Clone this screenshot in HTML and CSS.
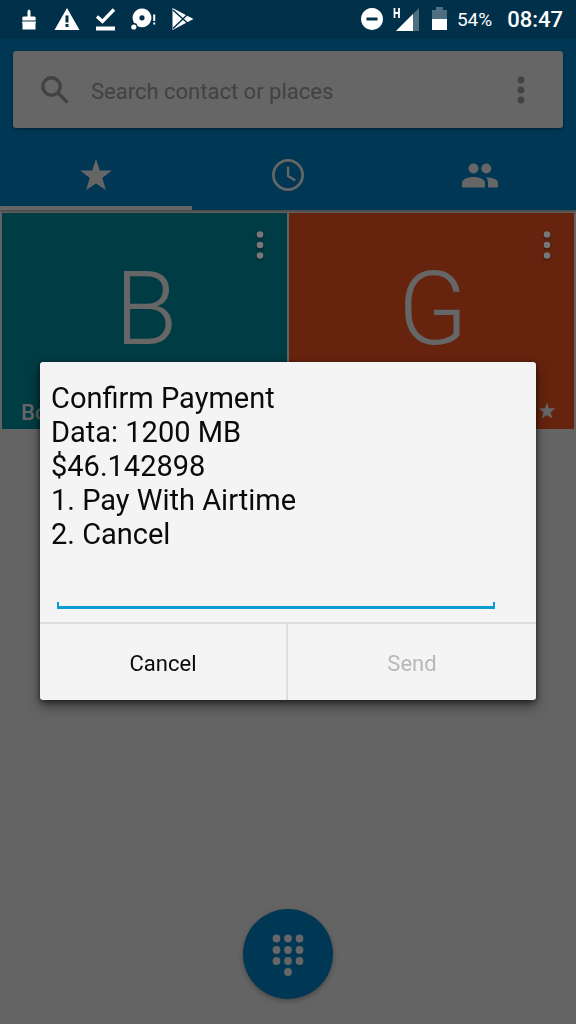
FILE: index.html
```html
<!DOCTYPE html>
<html lang="en">
<head>
<meta charset="utf-8">
<meta name="viewport" content="width=device-width, initial-scale=1">
<title>Phone</title>
<link rel="stylesheet" href="styles.css">
</head>
<body>
<div class="app">
  <div class="status">
    <div class="status-left">
      <svg class="notice" viewBox="0 0 26 26" aria-hidden="true"><path d="M11.500 5q1.500-3 3 0v5.500h4q1.200 0 1.200 1.500v2H6.300v-2q0-1.500 1.200-1.500h4z"/><path d="M6 15.500h14L19.500 18v5.500H6.500V18z"/><path d="M6.500 14.700h13" stroke="#9db0ba"/></svg>
      <svg class="notice" viewBox="0 0 26 26" aria-hidden="true"><path fill-rule="evenodd" d="M13 2L25.500 24H.5zM11.500 9.500v7h3v-7zm0 8.500V21h3v-3z"/></svg>
      <svg class="notice" viewBox="0 0 26 26" aria-hidden="true"><path d="M5 10.500l5.500 5L22 3.500" fill="none" stroke="#fff" stroke-width="3.400"/><path d="M4 20.500h19v4H4z"/></svg>
      <svg class="notice" viewBox="0 0 26 26" aria-hidden="true"><path fill-rule="evenodd" d="M12 2.500a9.400 9.400 0 1 1-.01 0zm0 6.800a2.600 2.600 0 1 0 .01 0z"/><circle cx="4" cy="20.500" r="3.400" fill="#00304a"/><circle cx="3.800" cy="21" r="2.600"/><path d="M23.200 8.500h2v6.500h-2zm0 8h2v2h-2z"/></svg>
      <svg class="notice" viewBox="0 0 26 26" aria-hidden="true"><path d="M4.500 2L25.500 13 4.500 24z"/><path d="M5 4l15 13.500M5 22.500L20 8" fill="none" stroke="#00304a" stroke-width="1.500"/></svg>
    </div>
    <div class="status-right">
      <svg class="dnd" viewBox="0 0 22 22" aria-hidden="true"><path fill-rule="evenodd" d="M11 0a11 11 0 1 1-.01 0zM5.500 9.500v3h11v-3z"/></svg>
      <svg class="signal" viewBox="0 0 26 24" aria-hidden="true"><path d="M26 1v23H3z" fill="#4d6f80"/><path d="M20 7v17H3z"/><path d="M1.500 1v10M6 1v10M1 6h5" fill="none" stroke="#fff" stroke-width="1.800"/></svg>
      <svg class="battery" viewBox="0 0 15 24" aria-hidden="true"><path d="M4 0h7v3h4v9H0V3h4z" fill="#4d6f80"/><path d="M0 12h15v11H0z"/></svg>
      <span class="percent">54%</span>
      <time class="clock">08:47</time>
    </div>
  </div>

  <header class="header">
    <div class="search">
      <label class="search-label" for="search" aria-label="Search">
        <svg class="search-icon" viewBox="0 0 28 28" aria-hidden="true"><circle cx="10.500" cy="10.500" r="8.700"/><path d="M17 17l9.500 9.500"/></svg>
      </label>
      <input class="search-input" id="search" type="text" placeholder="Search contact or places">
      <button class="more" type="button" aria-label="More options">
        <svg class="dots" viewBox="0 0 8 28" aria-hidden="true"><circle cx="4" cy="4" r="3.400"/><circle cx="4" cy="14" r="3.400"/><circle cx="4" cy="24" r="3.400"/></svg>
      </button>
    </div>
    <nav class="tabs">
      <button class="tab tab-on" type="button" aria-label="Favourites"><svg class="tab-icon" viewBox="0 0 36 36"><path d="M18 2l3.800 11.500 12 .1-9.500 7.400 3.500 12L18 26.500 8.200 33l3.500-12-9.500-7.400 12-.1z"/></svg></button>
      <button class="tab" type="button" aria-label="Recent"><svg class="tab-icon" viewBox="0 0 36 36"><g fill="none" stroke="#666" stroke-width="2.800"><circle cx="18" cy="18" r="14.600"/><path d="M18 9.500V19l7.300 4.500" stroke-width="2.300"/></g></svg></button>
      <button class="tab" type="button" aria-label="Contacts"><svg class="tab-icon" viewBox="0 0 36 36"><circle cx="11.500" cy="11.500" r="5"/><circle cx="24.300" cy="11.500" r="5"/><path d="M0 30.500v-4.500c0-4 6.500-6 11.500-6s11.500 2 11.500 6v4.500zM24 20.200c6 .3 12 2 12 5.800v4.500H26v-4.500c0-2.300-.5-4.300-2-5.800z"/></svg></button>
    </nav>
  </header>

  <main class="main">
    <section class="tiles">
      <article class="tile tile-teal">
        <button class="tile-more" type="button" aria-label="Contact details">
          <svg class="dots" viewBox="0 0 8 28" aria-hidden="true"><circle cx="4" cy="3.500" r="3.300"/><circle cx="4" cy="14" r="3.300"/><circle cx="4" cy="24.500" r="3.300"/></svg>
        </button>
        <span class="letter">B</span>
        <span class="name">Bo</span>
      </article>
      <article class="tile tile-orange">
        <button class="tile-more" type="button" aria-label="Contact details">
          <svg class="dots" viewBox="0 0 8 28" aria-hidden="true"><circle cx="4" cy="3.500" r="3.300"/><circle cx="4" cy="14" r="3.300"/><circle cx="4" cy="24.500" r="3.300"/></svg>
        </button>
        <span class="letter">G</span>
        <svg class="tile-star" viewBox="0 0 36 36" aria-hidden="true"><path d="M18 1l4 11.500 13 .1-10 8 3.500 12.400L18 26 7.500 33 11 20.600l-10-8 13-.1z"/></svg>
      </article>
    </section>
    <button class="fab" type="button" aria-label="Dial pad">
      <svg class="pad" viewBox="0 0 32 44" aria-hidden="true"><circle cx="4.500" cy="6.500" r="3.900"/><circle cx="16" cy="6.500" r="3.900"/><circle cx="27.500" cy="6.500" r="3.900"/><circle cx="4.500" cy="18" r="3.900"/><circle cx="16" cy="18" r="3.900"/><circle cx="27.500" cy="18" r="3.900"/><circle cx="4.500" cy="29" r="3.900"/><circle cx="16" cy="29" r="3.900"/><circle cx="27.500" cy="29" r="3.900"/><circle cx="16" cy="40" r="3.900"/></svg>
    </button>
  </main>
</div>

<div class="overlay">
  <form class="dialog" role="dialog" aria-modal="true" aria-labelledby="message">
    <div class="dialog-body">
      <label class="message" id="message" for="reply">Confirm Payment<br>Data: 1200 MB<br>$46.142898<br>1. Pay With Airtime<br>2. Cancel</label>
      <input class="reply" id="reply" type="text">
    </div>
    <div class="actions">
      <button class="action action-cancel" type="button">Cancel</button>
      <button class="action" type="submit" disabled>Send</button>
    </div>
  </form>
</div>
</body>
</html>
```

FILE: styles.css
```css
* {
  box-sizing: border-box;
}

body {
  margin: 0;
  background: #646464;
  font-family: Roboto, "Liberation Sans", sans-serif;
}

button,
input {
  margin: 0;
  padding: 0;
  border: 0;
  border-radius: 0;
  background: none;
  font: inherit;
  outline: none;
}

svg {
  display: block;
}

.app {
  display: flex;
  flex-direction: column;
  min-height: 100vh;
}

/* Status bar */
.status {
  display: flex;
  align-items: center;
  justify-content: space-between;
  height: 38px;
  padding: 0 13px 0 16px;
  background: #00304a;
  color: #fff;
  fill: #fff;
}

.status-left,
.status-right {
  display: flex;
  align-items: center;
}

.status-left {
  gap: 12px;
}

.notice {
  width: 26px;
  height: 26px;
}

.dnd {
  width: 22px;
  height: 22px;
  margin-right: 10px;
}

.signal {
  width: 26px;
  height: 24px;
  margin-right: 13px;
}

.battery {
  width: 15px;
  height: 24px;
  margin-right: 10px;
}

.percent {
  margin-right: 15px;
  font-size: 19px;
}

.clock {
  font-size: 22px;
  font-weight: 500;
}

/* Search and tabs */
.header {
  padding-top: 13px;
  background: #003754;
  box-shadow: 0 1px 3px rgba(0, 0, 0, 0.4);
}

.search {
  display: flex;
  align-items: center;
  height: 77px;
  margin: 0 13px;
  padding: 0 38px 0 28px;
  border-radius: 3px;
  background: #666;
  box-shadow: 0 1px 3px rgba(0, 0, 0, 0.4);
}

.search-icon {
  width: 28px;
  height: 28px;
  fill: none;
  stroke: #424242;
  stroke-width: 3.4;
}

.search-input {
  flex: 1;
  min-width: 0;
  margin-left: 22px;
  padding-top: 3px;
  color: #424242;
  font-size: 22px;
}

.search-input::placeholder {
  color: #424242;
  opacity: 1;
}

.dots {
  width: 8px;
  height: 28px;
}

.more {
  fill: #424242;
}

.tabs {
  display: grid;
  grid-template-columns: repeat(3, 1fr);
  height: 82px;
}

.tab {
  display: flex;
  justify-content: center;
  padding-top: 29px;
  fill: #666;
}

.tab-on {
  border-bottom: 4px solid #666;
}

.tab-icon {
  width: 36px;
  height: 36px;
}

/* Contact tiles */
.main {
  display: flex;
  flex: 1;
  flex-direction: column;
  justify-content: space-between;
}

.tiles {
  display: grid;
  grid-template-columns: 1fr 1fr;
  gap: 2px;
  padding: 3px 2px 0;
}

.tile {
  position: relative;
  display: flex;
  align-items: center;
  justify-content: center;
  height: 216px;
  padding: 0 0 24px 3px;
  color: #666;
  fill: #666;
}

.tile-teal {
  background: #003c43;
}

.tile-orange {
  background: #66230e;
}

.letter {
  font-size: 102px;
  font-weight: 300;
  line-height: 120px;
}

.tile-more {
  position: absolute;
  top: 18px;
  right: 23px;
  fill: #777;
  filter: drop-shadow(0 1px 1px rgba(0, 0, 0, 0.5));
}

.name {
  position: absolute;
  bottom: 4px;
  left: 19px;
  font-size: 22px;
  font-weight: 500;
}

.tile-star {
  position: absolute;
  right: 18px;
  bottom: 9px;
  width: 18px;
  height: 18px;
}

.fab {
  display: flex;
  align-items: center;
  justify-content: center;
  align-self: center;
  width: 90px;
  height: 90px;
  margin: 24px 0 25px;
  border-radius: 50%;
  background: #003754;
  box-shadow: 0 2px 5px rgba(0, 0, 0, 0.3);
  fill: #666;
}

.pad {
  width: 32px;
  height: 44px;
}

/* Payment dialog */
.overlay {
  position: fixed;
  inset: 0;
  display: flex;
  align-items: center;
  justify-content: center;
  padding: 38px 40px 0;
}

.dialog {
  width: 100%;
  border-radius: 3px;
  background: #f4f4f4;
  box-shadow: 0 6px 12px rgba(0, 0, 0, 0.5), 0 1px 5px rgba(0, 0, 0, 0.5);
}

.dialog-body {
  padding: 19px 40px 13px 11px;
}

.message {
  display: block;
  color: #0a0a0a;
  font-size: 29px;
  line-height: 34px;
}

.reply {
  display: block;
  width: 100%;
  height: 58px;
  padding: 0 12px 8px;
  border: solid transparent;
  border-width: 0 1px 0 6px;
  background:
    linear-gradient(#0a9bd0, #0a9bd0) left bottom / 2px 7px no-repeat,
    linear-gradient(#0a9bd0, #0a9bd0) right bottom / 2px 7px no-repeat,
    linear-gradient(#0a9bd0, #0a9bd0) left bottom / 100% 3px no-repeat;
  color: #0a0a0a;
  font-size: 29px;
}

.actions {
  display: grid;
  grid-template-columns: 1fr 1fr;
  border-top: 2px solid #dedede;
}

.action {
  height: 76px;
  padding-top: 2px;
  color: #0a0a0a;
  font-size: 22px;
}

.action-cancel {
  border-right: 2px solid #dedede;
}

.action:disabled {
  color: #b8b8b8;
}
```
